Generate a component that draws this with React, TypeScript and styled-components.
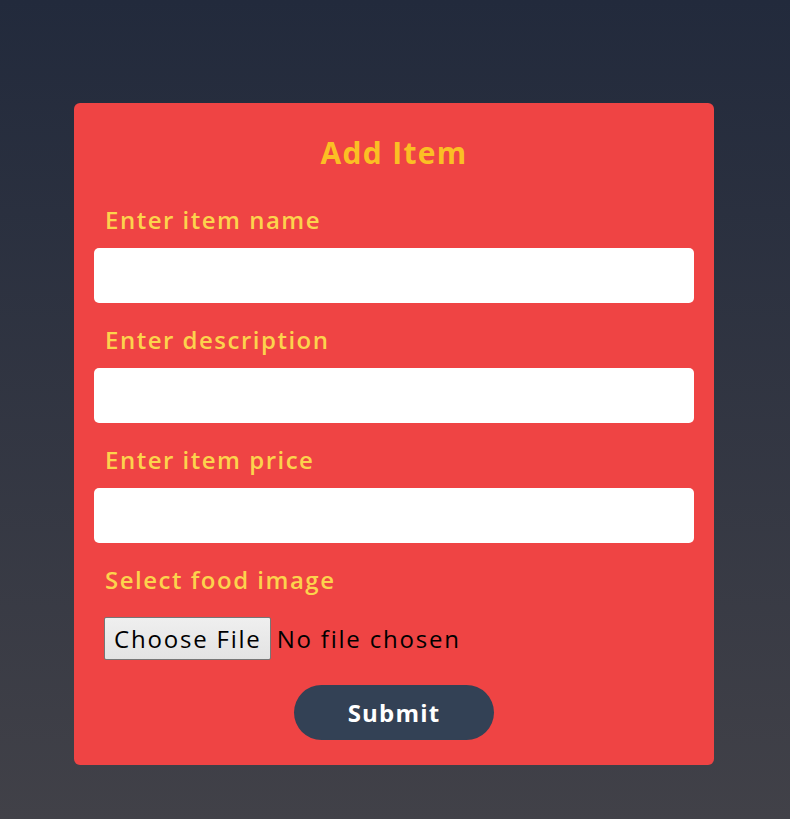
import React from "react";
import styled, { createGlobalStyle } from "styled-components";

const Global = createGlobalStyle`
  html, body { margin: 0; padding: 0; }
  body {
    min-height: 819px;
    background: linear-gradient(to bottom, #222a3c, #414148);
    font-family: "Open Sans", "Liberation Sans", sans-serif;
  }
`;

const Page = styled.div`
  min-height: 819px;
  box-sizing: border-box;
  padding: 103px 2px 0 0;
  display: flex;
  justify-content: center;
  align-items: flex-start;
`;

const Card = styled.form`
  width: 640px;
  box-sizing: border-box;
  background: #ef4444;
  border-radius: 6px;
  padding: 30px 20px 25px 20px;
  display: flex;
  flex-direction: column;
`;

const Title = styled.h1`
  margin: 0 0 33px;
  text-align: center;
  color: #fbbf24;
  font-size: 30px;
  font-weight: 700;
  letter-spacing: 1.3px;
  line-height: 40px;
`;

const Field = styled.div`
  display: flex;
  flex-direction: column;
`;

const Label = styled.label`
  color: #fcd34d;
  font-size: 24px;
  font-weight: 600;
  letter-spacing: 1.5px;
  padding-left: 11px;
  line-height: 28px;
  margin-bottom: 14px;
`;

const Input = styled.input`
  height: 55px;
  border: none;
  border-radius: 5px;
  background: #fff;
  margin-bottom: 23px;
  font-size: 20px;
  padding: 0 12px;
  box-sizing: border-box;
`;

const FileInput = styled.input`
  font-family: "Open Sans", "Liberation Sans", sans-serif;
  font-size: 24px;
  font-weight: 500;
  letter-spacing: 1.8px;
  margin: 9px 0 0 10px;
  height: 43px;
  color: #000;

  &::file-selector-button {
    font: inherit;
    letter-spacing: inherit;
    height: 43px;
    box-sizing: border-box;
    padding: 0 8px 0 9px;
    margin-right: 6px;
    border: 1px solid #767676;
    border-radius: 2px;
    background: linear-gradient(to bottom, #efefef, #e3e3e3);
    color: #000;
  }
`;

const Submit = styled.button`
  align-self: center;
  width: 200px;
  height: 55px;
  margin-top: 25px;
  border: none;
  border-radius: 28px;
  background: #334155;
  color: #fff;
  font-family: inherit;
  font-size: 24px;
  font-weight: 700;
  letter-spacing: 1.2px;
`;

export default function App() {
  return (
    <>
      <Global />
      <Page>
        <Card onSubmit={(e) => e.preventDefault()}>
          <Title>Add Item</Title>
          <Field>
            <Label>Enter item name</Label>
            <Input type="text" />
          </Field>
          <Field>
            <Label>Enter description</Label>
            <Input type="text" />
          </Field>
          <Field>
            <Label>Enter item price</Label>
            <Input type="text" />
          </Field>
          <Field>
            <Label>Select food image</Label>
            <FileInput type="file" />
          </Field>
          <Submit type="submit">Submit</Submit>
        </Card>
      </Page>
    </>
  );
}
